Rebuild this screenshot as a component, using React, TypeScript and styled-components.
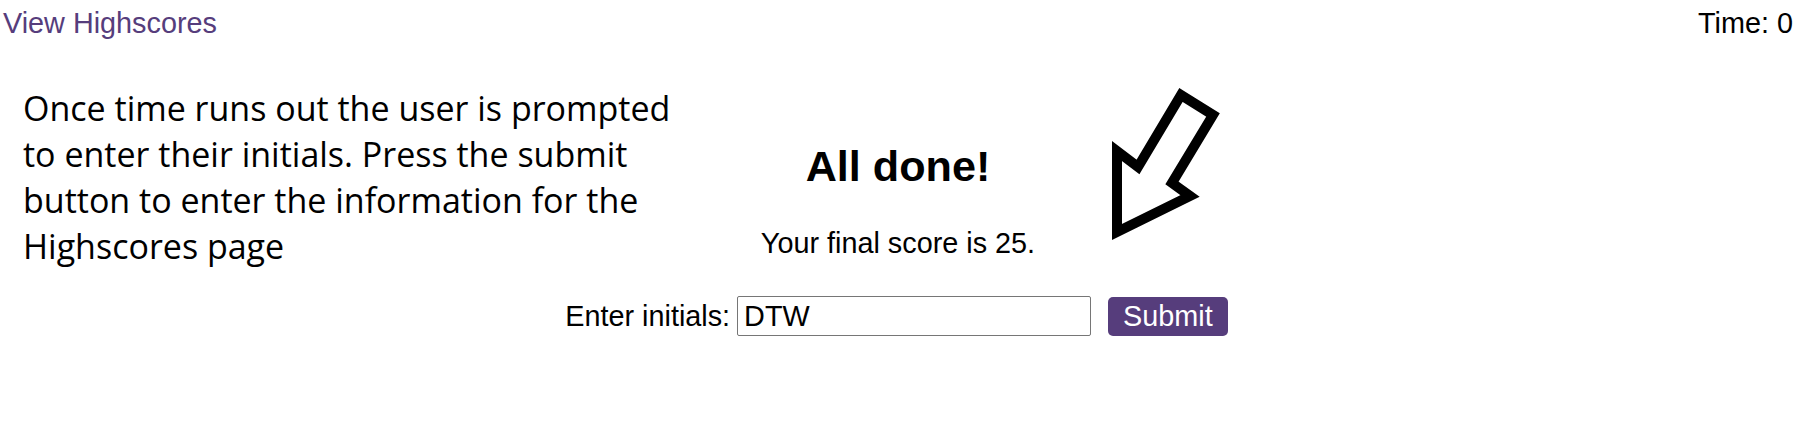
import React from "react";
import styled, { createGlobalStyle } from "styled-components";

const GlobalStyle = createGlobalStyle`
  html, body {
    margin: 0;
    padding: 0;
    background: #ffffff;
  }
  body {
    font-family: "Liberation Sans", Arial, sans-serif;
    font-size: 28.8px;
    color: #000000;
  }
`;

const Page = styled.div`
  position: relative;
  width: 1805px;
  min-height: 427px;
  overflow: hidden;
`;

const Header = styled.header`
  display: flex;
  justify-content: space-between;
  align-items: flex-start;
  padding: 7px 12px 0 3px;
  line-height: 33px;
`;

const HighscoreLink = styled.a`
  color: #563d7c;
  text-decoration: none;
  cursor: pointer;
`;

const Timer = styled.div`
  color: #000000;
`;

const Quiz = styled.section`
  display: flex;
  flex-direction: column;
  align-items: center;
  margin-top: 101px;
  padding-right: 9px;
`;

const Title = styled.h2`
  margin: 0;
  font-size: 43.2px;
  line-height: 50px;
  font-weight: 700;
`;

const Score = styled.p`
  margin: 36px 0 0;
  line-height: 33px;
`;

const Form = styled.form`
  display: flex;
  align-items: center;
  margin-top: 36px;
  margin-right: 3px;
`;

const Label = styled.label`
  line-height: 33px;
`;

const Input = styled.input`
  box-sizing: border-box;
  width: 354px;
  height: 40px;
  margin-left: 7px;
  padding: 0 6px;
  border: 1px solid #767676;
  border-radius: 2px;
  font-family: "Liberation Sans", Arial, sans-serif;
  font-size: 28.8px;
  color: #000000;
  outline: none;
`;

const SubmitButton = styled.button`
  box-sizing: border-box;
  height: 39px;
  margin-left: 17px;
  padding: 0 15px;
  border: none;
  border-radius: 5px;
  background: #563d7c;
  color: #ffffff;
  font-family: "Liberation Sans", Arial, sans-serif;
  font-size: 28.8px;
  line-height: 33px;
  cursor: pointer;
`;

const Note = styled.p`
  position: absolute;
  left: 23px;
  top: 85px;
  width: 668px;
  margin: 0;
  font-family: "Open Sans", "Noto Sans", sans-serif;
  font-size: 34px;
  line-height: 46px;
  color: #000000;
`;

const ArrowMark = styled.svg`
  position: absolute;
  left: 1106px;
  top: 84px;
  width: 120px;
  height: 160px;
`;

export default function App() {
  return (
    <>
      <GlobalStyle />
      <Page>
        <Header>
          <HighscoreLink>View Highscores</HighscoreLink>
          <Timer>Time: 0</Timer>
        </Header>
        <Quiz>
          <Title>All done!</Title>
          <Score>Your final score is 25.</Score>
          <Form onSubmit={(e) => e.preventDefault()}>
            <Label htmlFor="initials">Enter initials:</Label>
            <Input id="initials" type="text" defaultValue="DTW" />
            <SubmitButton type="submit">Submit</SubmitButton>
          </Form>
        </Quiz>
        <Note>
          Once time runs out the user is prompted to enter their initials. Press the submit button
          to enter the information for the Highscores page
        </Note>
        <ArrowMark viewBox="0 0 120 160">
          <polygon
            points="75,11 107,31 66,99 84,112 11,148 11,67 32,83"
            fill="#ffffff"
            stroke="#000000"
            strokeWidth="10"
            strokeLinejoin="miter"
            strokeMiterlimit="10"
          />
        </ArrowMark>
      </Page>
    </>
  );
}
